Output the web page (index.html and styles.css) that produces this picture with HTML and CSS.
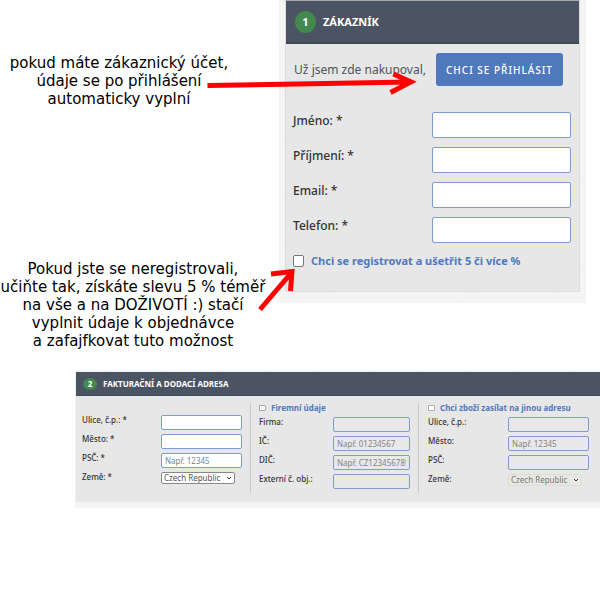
FILE: index.html
```html
<!DOCTYPE html>
<html lang="cs">
<head>
    <meta charset="UTF-8">
    <meta name="viewport" content="width=device-width, initial-scale=1.0">
    <title>Objednávka</title>
    <link rel="stylesheet" href="styles.css">
</head>
<body>
    <main class="page">
        <div class="top">
            <div class="notes">
                <p class="note note-login">pokud máte zákaznický účet,<br>údaje se po přihlášení<br>automaticky vyplní</p>
                <p class="note note-register">Pokud jste se neregistrovali,<br>učiňte tak, získáte slevu 5 % téměř<br>na vše a na DOŽIVOTÍ :) stačí<br>vyplnit údaje k objednávce<br>a zafajfkovat tuto možnost</p>
            </div>

            <!-- Customer -->
            <section class="frame customer">
                <div class="panel">
                    <h2 class="panel-head"><span class="step">1</span>ZÁKAZNÍK</h2>
                    <form class="customer-body">
                        <div class="login">
                            <span>Už jsem zde nakupoval,</span>
                            <button type="button" class="login-button">CHCI SE PŘIHLÁSIT</button>
                        </div>
                        <div class="row"><label for="firstname">Jméno: *</label><input type="text" id="firstname"></div>
                        <div class="row"><label for="lastname">Příjmení: *</label><input type="text" id="lastname"></div>
                        <div class="row"><label for="email">Email: *</label><input type="email" id="email"></div>
                        <div class="row"><label for="phone">Telefon: *</label><input type="tel" id="phone"></div>
                        <div class="check">
                            <input type="checkbox" id="register">
                            <label for="register">Chci se registrovat a ušetřit 5 či více %</label>
                        </div>
                    </form>
                </div>
            </section>
        </div>

        <!-- Billing and delivery address -->
        <section class="frame address">
            <div class="panel">
                <h2 class="panel-head"><span class="step">2</span>FAKTURAČNÍ A DODACÍ ADRESA</h2>
                <form class="address-body">
                    <div class="col col-billing">
                        <div class="row"><label for="street">Ulice, č.p.: *</label><input type="text" id="street"></div>
                        <div class="row"><label for="city">Město: *</label><input type="text" id="city"></div>
                        <div class="row"><label for="zip">PSČ: *</label><input type="text" id="zip" placeholder="Např. 12345"></div>
                        <div class="row">
                            <label for="country">Země: *</label>
                            <span class="select"><select id="country"><option>Czech Republic</option></select><svg viewBox="0 0 6 4"><path d="M1 1l2 2 2-2"/></svg></span>
                        </div>
                    </div>
                    <div class="col col-company">
                        <div class="check"><input type="checkbox" id="company-on"><label for="company-on">Firemní údaje</label></div>
                        <div class="row"><label for="company">Firma:</label><input type="text" id="company" disabled></div>
                        <div class="row"><label for="ic">IČ:</label><input type="text" id="ic" placeholder="Např. 01234567" disabled></div>
                        <div class="row"><label for="dic">DIČ:</label><input type="text" id="dic" placeholder="Např. CZ123456789" disabled></div>
                        <div class="row"><label for="external">Externí č. obj.:</label><input type="text" id="external" disabled></div>
                    </div>
                    <div class="col col-delivery">
                        <div class="check"><input type="checkbox" id="delivery-on"><label for="delivery-on">Chci zboží zasílat na jinou adresu</label></div>
                        <div class="row"><label for="street2">Ulice, č.p.:</label><input type="text" id="street2" disabled></div>
                        <div class="row"><label for="city2">Město:</label><input type="text" id="city2" placeholder="Např. 12345" disabled></div>
                        <div class="row"><label for="zip2">PSČ:</label><input type="text" id="zip2" disabled></div>
                        <div class="row">
                            <label for="country2">Země:</label>
                            <span class="select"><select id="country2" disabled><option>Czech Republic</option></select><svg viewBox="0 0 6 4"><path d="M1 1l2 2 2-2"/></svg></span>
                        </div>
                    </div>
                </form>
            </div>
        </section>

        <!-- Arrows over the form -->
        <svg class="arrows" viewBox="0 0 600 360">
            <path d="M207.500 85.500L411 82M393.500 74L411 82L390.500 92.500"/>
            <path d="M260 309.500L292 272M271 274L292 271.500L290.500 291"/>
        </svg>
    </main>
</body>
</html>
```

FILE: styles.css
```css
* {
    box-sizing: border-box;
}
body {
    margin: 0;
    background-color: #fff;
    color: #333;
    font-family: "Noto Sans", sans-serif;
}
.page {
    position: relative;
}
.top {
    display: grid;
    grid-template-columns: minmax(0, 279fr) minmax(0, 307fr);
    align-items: start;
    padding-right: 14px;
}

/* Notes */
.notes {
    padding-top: 54px;
    color: #000;
    font-family: "DejaVu Sans", sans-serif;
    font-size: 15px;
    line-height: 18px;
    text-align: center;
    white-space: nowrap;
}
.note {
    margin: 0;
}
.note-login {
    padding-right: 41px;
}
.note-register {
    margin-top: 152px;
    padding-right: 13px;
}

/* Panels */
.frame {
    background: repeating-radial-gradient(circle at 20px 20px, #f4f4f4 0 24px, #f1f1f1 24px 25px, #f4f4f4 25px 50px);
}
.panel {
    background-color: #e7e7e7;
    border: 1px solid #dcdcdc;
    border-top-color: #aaa;
}
.panel-head {
    display: flex;
    align-items: center;
    margin: 0;
    background-color: #4b5462;
    color: #fff;
    font-weight: bold;
}
.step {
    display: flex;
    align-items: center;
    justify-content: center;
    border-radius: 50%;
    background-color: #43894d;
}
.row {
    display: flex;
    align-items: flex-start;
    justify-content: space-between;
}
input,
select {
    margin: 0;
    font-family: inherit;
}
input:not([type="checkbox"]) {
    border: 1px solid #7c9cd3;
    border-radius: 2px;
    background-color: #fff;
}
input:disabled:not([type="checkbox"]) {
    background-color: #e8e8e8;
}
input::placeholder {
    color: #858585;
}
input[type="checkbox"] {
    appearance: none;
    border: 1px solid #777;
    border-radius: 2px;
    background-color: #fff;
}
.check {
    display: flex;
    align-items: center;
    color: #5078bd;
    font-weight: bold;
}

/* Customer */
.customer {
    padding: 0 6px 11px;
}
.customer .panel-head {
    gap: 7px;
    height: 43px;
    padding: 0 9px;
    border-bottom: 2px solid #414956;
    font-size: 11px;
}
.customer .step {
    width: 21px;
    height: 22px;
}
.customer-body {
    padding: 9px 8px 21px 7px;
    font-size: 11px;
    line-height: 18px;
}
.login {
    display: flex;
    align-items: center;
    justify-content: flex-end;
    gap: 10px;
    margin-bottom: 26px;
    padding-right: 8px;
    color: #4b5462;
    font-size: 12px;
    white-space: nowrap;
}
.login-button {
    width: 127px;
    height: 33px;
    padding: 0;
    border: 0;
    border-radius: 3px;
    background-color: #5078bd;
    color: #fff;
    font-family: inherit;
    font-size: 10px;
    font-weight: 500;
    letter-spacing: 1px;
}
.customer .row {
    height: 26px;
    margin-bottom: 9px;
    font-size: 12px;
    font-weight: 500;
}
.customer .row input {
    width: 50%;
    height: 26px;
}
.customer .check {
    gap: 7px;
    height: 18px;
}
.customer .check input {
    width: 11px;
    height: 12px;
}

/* Address */
.address {
    margin: 20px 0 0 75px;
    padding: 2px 0 6px 1px;
}
.address .panel {
    border: 0;
}
.address .panel-head {
    gap: 6px;
    height: 24px;
    padding: 0 7px;
    border-bottom: 1px solid #414956;
    font-size: 8px;
}
.address .step {
    width: 14px;
    height: 12px;
}
.address-body {
    display: grid;
    grid-template-columns: 174fr 168fr 182fr;
    align-items: start;
    padding: 7px 0 9px;
    font-size: 8px;
    line-height: 10px;
}
.col {
    display: grid;
    gap: 4px;
    padding: 0 8px;
}
.col + .col {
    border-left: 1px solid #c8c8c8;
    padding-bottom: 4px;
}
.col-billing {
    padding: 12px 8px 0 6px;
}
.col-delivery {
    padding-right: 11px;
    padding-left: 9px;
}
.address .row {
    height: 15px;
    font-weight: 500;
}
.address .row > input,
.select {
    width: 81px;
    height: 15px;
}
.col-company .row > input {
    width: 77px;
}
.address .row > input {
    padding: 0 3px;
    font-size: 8px;
}
.address .check {
    gap: 5px;
    height: 10px;
}
.address .check input {
    width: 7px;
    height: 6px;
    border-color: #aaa;
    border-radius: 1px;
}
.select {
    position: relative;
}
.select select {
    display: block;
    width: 74px;
    height: 12px;
    padding: 0 2px;
    appearance: none;
    border: 1px solid #888;
    border-radius: 2px;
    background-color: #fff;
    color: #555;
    font-size: 8px;
    line-height: 10px;
}
.select select:disabled {
    border-color: #ddddd5;
    background-color: #e8e8e2;
    color: #777;
    opacity: 1;
}
.select svg {
    position: absolute;
    top: 4px;
    right: 10px;
    width: 6px;
    height: 4px;
    fill: none;
    stroke: #333;
    pointer-events: none;
}

.arrows {
    position: absolute;
    top: 0;
    left: 0;
    width: 600px;
    height: 360px;
    fill: none;
    stroke: #f00;
    stroke-width: 5;
    pointer-events: none;
}
```
